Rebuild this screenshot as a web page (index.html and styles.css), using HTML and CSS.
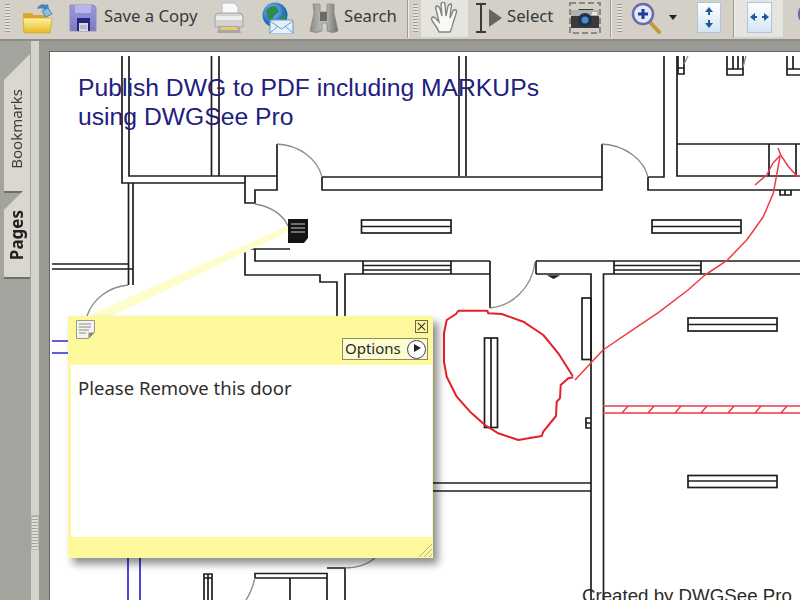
FILE: index.html
```html
<!DOCTYPE html>
<html lang="en">
<head>
<meta charset="utf-8">
<title>DWGSee Pro</title>
<link rel="stylesheet" href="styles.css">
</head>
<body>
<div class="app">
  <header class="toolbar">
    <span class="grip grip-first"></span>
    <svg class="ic ic-open" viewBox="0 0 32 32"><defs><linearGradient id="fy" x1="0" y1="0" x2="0" y2="1"><stop offset="0" stop-color="#fff3a0"/><stop offset="1" stop-color="#e8b820"/></linearGradient><linearGradient id="sb" x1="0" y1="0" x2="0" y2="1"><stop offset="0" stop-color="#9d98d8"/><stop offset="1" stop-color="#7d7ac4"/></linearGradient><radialGradient id="gl" cx=".4" cy=".35" r=".7"><stop offset="0" stop-color="#9fd4f0"/><stop offset=".6" stop-color="#2a78c8"/><stop offset="1" stop-color="#154a9a"/></radialGradient><linearGradient id="bn" x1="0" y1="0" x2="1" y2="0"><stop offset="0" stop-color="#8a8a86"/><stop offset=".5" stop-color="#c4c4c0"/><stop offset="1" stop-color="#6e6e6a"/></linearGradient></defs><path d="M1 11h9l2 2h12v4H1z" fill="#d8a828"/><path d="M1 16h29l-2 15H2z" fill="url(#fy)" stroke="#d0a830" stroke-width=".8"/><path d="M15 7c1-4 6-6 9-4l2-1 1 6-6 1 1-2c-2-1-5-1-7 0z" fill="#4a82b8"/><path d="M20 9l6-3 4 6-6 3z" fill="#8cc0e0" stroke="#4a82b8"/></svg>
    <svg class="ic ic-save" viewBox="0 0 28 28"><path d="M1 1h24l2 2v24H1z" fill="url(#sb)" stroke="#8f8fc4"/><rect x="6" y="1" width="16" height="11" fill="#b8b6e6"/><rect x="6" y="9" width="16" height="3" fill="#8f8dcf"/><rect x="8" y="14" width="13" height="13" fill="#23267c"/><rect x="10" y="19" width="9" height="8" fill="#d8d8e2"/><path d="M11 22h7M11 24h7" stroke="#9a9aa8"/></svg>
    <span class="label label-save">Save a Copy</span>
    <svg class="ic ic-print" viewBox="0 0 32 32"><path d="M9 1h12l4 4v8H9z" fill="#f6f8fc" stroke="#b8bcc6"/><path d="M2 15q0-4 4-4h20q4 0 4 4v10H2z" fill="#d2d2d2" stroke="#a4a4a4"/><rect x="3" y="14" width="26" height="4" fill="#eeeeee"/><path d="M6 24h20l2 7H4z" fill="#a8a8a2"/><path d="M8 25h16l1 3H7z" fill="#e8cc66"/></svg>
    <svg class="ic ic-web" viewBox="0 0 32 32"><circle cx="13" cy="13" r="12.500" fill="url(#gl)"/><path d="M4 8q6-6 11-3l2 5-5 4-3 6-4-5z" fill="#2e8a50"/><path d="M18 16l5-4 2 3-4 5z" fill="#2e8a50"/><rect x="8" y="18" width="23" height="14" rx="1" fill="#e4f0fa" stroke="#6a9ad0"/><path d="M8 19l11.500 8 11.500-8M8 31l8-7M31 31l-8-7" fill="none" stroke="#6a9ad0"/></svg>
    <svg class="ic ic-bino" viewBox="0 0 30 30"><path d="M4 1h7v8h7V1h7v9l4 18q-5 3-11 0v-8h-5v8q-6 3-12 0l4-18z" fill="url(#bn)" stroke="#8a8a82" stroke-width=".8"/><path d="M11 9h7v9h-7z" fill="#6a6a64"/></svg>
    <span class="label label-search">Search</span>
    <span class="sep sep-a"></span>
    <span class="grip grip-a"></span>
    <span class="press press-hand"><svg class="ic-in" viewBox="0 0 30 32"><path d="M9 30q-2-5-6-10-3-4 0-5 2 0 5 4l1 1-3-13q-1-3 1-3 2 0 3 3l2 7-1-11q0-3 2-3t2 3l1 11 2-10q1-2 3-2 1 1 0 4l-1 10 3-7q1-2 3-1 1 1 0 4l-3 9q-1 6-3 9z" fill="#f8f8f4" stroke="#85857f" stroke-width="1.400"/></svg></span>
    <svg class="ic ic-beam" viewBox="0 0 28 30"><path d="M1 1h10M6 1v28M1 29h10" fill="none" stroke="#3a3a38" stroke-width="2"/><path d="M14 6l13 9-13 9z" fill="#66665f"/></svg>
    <span class="label label-select">Select</span>
    <svg class="ic ic-cam" viewBox="0 0 32 32"><rect x="1" y="1" width="30" height="30" fill="none" stroke="#8a8a84" stroke-width="2" stroke-dasharray="6 3"/><path d="M2 9h6l2-2h14l1 2h5v17H2z" fill="#3a3a3a"/><rect x="2" y="8" width="28" height="6" fill="#b0b0ae"/><circle cx="16" cy="18" r="7" fill="#20304a"/><circle cx="16" cy="18" r="3.500" fill="#4a88c8"/><rect x="23" y="10" width="5" height="3" fill="#e8e8e8"/></svg>
    <span class="sep sep-b"></span>
    <span class="grip grip-b"></span>
    <svg class="ic ic-zoom" viewBox="0 0 30 32"><path d="M18 19l10 11" stroke="#c49a3a" stroke-width="4" stroke-linecap="round"/><circle cx="12" cy="12" r="10" fill="#e4e8fa" stroke="#6a6ab0" stroke-width="2.500"/><path d="M7 12h10M12 7v10" stroke="#1e3a9a" stroke-width="3"/></svg>
    <span class="caret"></span>
    <svg class="ic ic-fitp" viewBox="0 0 24 31"><defs><linearGradient id="pg" x1="0" y1="0" x2="0" y2="1"><stop offset="0" stop-color="#fff"/><stop offset="1" stop-color="#d4e4f4"/></linearGradient></defs><rect x=".5" y=".5" width="23" height="30" fill="url(#pg)" stroke="#b0c4dc"/><path d="M12 5l-4 5h3v3h2v-3h3zM12 26l-4-5h3v-3h2v3h3z" fill="#1e5a9a"/></svg>
    <span class="sep sep-c"></span>
    <span class="press press-fit"><svg class="ic-in" viewBox="0 0 25 31"><rect x=".5" y=".5" width="24" height="30" fill="url(#pg)" stroke="#b0c4dc"/><path d="M3 15l5-4v3h2v2H8v3zM22 15l-5-4v3h-2v2h2v3z" fill="#1e5a9a"/></svg></span>
    <svg class="ic ic-next" viewBox="0 0 30 32"><circle cx="12" cy="12" r="10" fill="#e4e8fa" stroke="#6a6ab0" stroke-width="2.500"/></svg>
  </header>
  <div class="main">
    <aside class="sidebar">
      <div class="tab tab-book"><span class="tab-text">Bookmarks</span></div>
      <div class="tab tab-pages"><span class="tab-text tab-strong">Pages</span></div>
    </aside>
    <div class="splitter"><span class="split-grip"></span></div>
    <section class="viewer">
      <div class="page">
        <svg class="drawing" viewBox="50 52 750 548" width="750" height="548">
          <g class="wall">
            <path d="M122 56V183H245M129 56V176H277M211.500 56V176M219 56V176"/>
            <path d="M245 176V203H255V190H277V144M322 177V190H602V144M322 177H602M459 56V176M466 56V176"/>
            <path d="M648 177V190H800M648 177H664V56M677 56V176H800M677 144H800M769 144V176M796 144V176"/>
            <path d="M780 190V195H791V190M785 190V195"/>
            <path d="M128.500 183V285M133 183V285M52 264H128.500M52 269H133"/>
            <rect x="361.500" y="220" width="89.500" height="13"/><path d="M361.500 226.500H451"/>
            <rect x="652" y="220" width="89" height="13"/><path d="M652 226.500H741"/>
            <path d="M290 249H245V275H320V282H337V320M255 249V261H490M345 320V274H490M490 261V308"/>
            <path d="M363 261V274M451 261V274M363 265.500H451M363 270H451"/>
            <path d="M536 261V274M536 261H800M536 274H591V600M603.500 600V274H800M614 261V274M701 261V274M614 265.500H701M614 270H701"/>
            <path d="M550 276H557L553.500 278Z"/>
            <rect x="582" y="298" width="9" height="61.500"/>
            <rect x="484.500" y="338" width="13" height="89.500"/><path d="M491 338V427.500"/>
            <path d="M591 418H586V428H591M586 423H591"/>
            <rect x="688" y="318" width="89" height="13"/><path d="M688 324.500H777"/>
            <rect x="688" y="475.500" width="89" height="12"/><path d="M688 481H777"/>
            <path d="M433 483H591M433 491H591"/>
            <path d="M204 600V574H212V600M208 574V600M204 578H212"/>
            <path d="M255 578V573.500H327V600M255 578H327M290 578V600M327 568H345V600"/>
            <path d="M678 56V74H684V56M678 68H684M727 56V75H743V56M727 69H743M733 56V69M738 56V69M787 56V75H800M787 69H800M793 56V69"/>
          </g>
          <g class="swing">
            <path d="M277 144C300 145 318 160 322 177M602 144C625 145 644 160 648 177M490 308C512 306 532 288 535 262M255 204C272 207 283 215 288 226M128 285C108 287 92 300 87 316M255 578C253 586 250 594 246 600M345 568C358 568 368 564 375 558M684 64L688 56M743 67L746 56"/>
          </g>
          <polygon class="leader" points="287,226 290,231 112,316 88,316"/>
          <g class="blue"><path d="M52 341H70M52 353H70M128 556V600M140 556V600"/></g>
          <g class="red">
            <path d="M572.700 376L558.300 353.300L543.300 335L523.300 321.700L501.700 314L488.300 313.300L487.300 310.700L458.300 310.700L456 314L446.700 320L444 333.300L444 361.700L446.700 376.700L456.700 396.700L470 411.700L485 425L498.300 433.300L518.300 440L541.700 436L543.300 431.700L556 416L556.700 401.700L560 398.300L560.700 385L568.300 378.300L573.300 377.300"/>
          </g>
          <g class="red-thin">
            <path d="M575 380L603 350L630 331.700L658.300 312.700L688 290L705 275L726.700 260.700L746.700 240L763.300 216.700L773.300 193.300L780 156.700"/>
            <path d="M755 185L766.700 175L773 163L780.700 155L778 148M780.700 155L788 166L796.700 176L800 176"/>
            <path d="M603 406H800M603 413H800M622 413L628 406M648 413L654 406M675 413L681 406M701 413L707 406M728 413L734 406M755 413L761 406M781 413L787 406"/>
          </g>
          <text class="title" x="78" y="96">Publish DWG to PDF including MARKUPs</text>
          <text class="title" x="78" y="125">using DWGSee Pro</text>
          <text class="credit" x="582" y="602">Created by DWGSee Pro.</text>
          <g class="marker">
            <path d="M288 219H308V238L304 243H288Z"/>
            <path d="M291 224H305M291 228H305M291 232H305" class="marker-lines"/>
          </g>
        </svg>
        <div class="note">
          <div class="note-head">
            <div class="note-top">
              <svg class="note-icon" viewBox="0 0 19 19"><path d="M.5.500h18v12l-6 6h-12z" fill="#f4f4ee" stroke="#9a9a90"/><path d="M3 4h12M3 7h12M3 10h10M3 13h7" stroke="#8a8a84"/><path d="M12.500 18.500v-6h6z" fill="#8a8a80"/></svg>
              <span class="note-close"><svg viewBox="0 0 12 12" class="note-x"><path d="M2 2l8 8M10 2l-8 8"/></svg></span>
            </div>
            <div class="note-bar">
              <span class="options"><span class="options-text">Options</span><span class="options-play"></span></span>
            </div>
          </div>
          <div class="note-body">Please Remove this door</div>
          <div class="note-foot"><svg class="note-resize" viewBox="0 0 16 16"><path d="M2 15L15 2M7 15L15 7M12 15L15 12"/></svg></div>
        </div>
      </div>
    </section>
  </div>
</div>
</body>
</html>
```
FILE: styles.css
```css
* { box-sizing: border-box; }
html, body { margin: 0; padding: 0; }
body { width: 800px; height: 600px; overflow: hidden; background: #a4a49e; font-family: "Noto Sans", "Liberation Sans", sans-serif; }
.app { width: 800px; height: 600px; display: flex; flex-direction: column; filter: blur(.45px); }

.toolbar { height: 41px; flex: none; display: flex; align-items: center; background: #d4d0c8; border-bottom: 2px solid #8d8d86; overflow: hidden; padding-bottom: 4px; color: #3a3a38; }
.ic { display: block; flex: none; }
.ic-in { display: block; }
.grip { flex: none; width: 5px; height: 28px; background: repeating-linear-gradient(#9c9a92 0 1px, #e4e2dc 1px 3px); }
.grip-first { margin-left: 5px; }
.ic-open { width: 32px; height: 32px; margin-left: 12px; }
.ic-save { width: 28px; height: 28px; margin-left: 15px; }
.label { flex: none; font-size: 16.700px; line-height: 20px; white-space: nowrap; padding-bottom: 3px; }
.label-save { margin-left: 7px; width: 94px; }
.ic-print { width: 32px; height: 32px; margin-left: 15px; }
.ic-web { width: 32px; height: 32px; margin-left: 17px; }
.ic-bino { width: 30px; height: 30px; margin-left: 15px; }
.label-search { margin-left: 5px; width: 54px; }
.sep { flex: none; width: 2px; height: 41px; background: #9c9a92; border-right: 1px solid #efece6; }
.sep-a { margin-left: 9px; }
.grip-a { margin-left: 4px; }
.press { flex: none; display: flex; align-items: center; justify-content: center; background: #e6e4de; height: 38px; }
.press-hand { width: 47px; margin-left: 3px; }
.press-hand .ic-in { width: 30px; height: 32px; }
.ic-beam { width: 28px; height: 30px; margin-left: 7px; }
.label-select { margin-left: 4px; width: 47px; }
.ic-cam { width: 32px; height: 32px; margin-left: 15px; }
.sep-b { margin-left: 9px; }
.grip-b { margin-left: 5px; }
.ic-zoom { width: 30px; height: 32px; margin-left: 9px; }
.caret { flex: none; margin-left: 8px; width: 0; height: 0; border: 4px solid transparent; border-top: 5px solid #222; border-bottom: 0; }
.ic-fitp { width: 24px; height: 31px; margin-left: 20px; }
.sep-c { margin-left: 12px; }
.press-fit { width: 48px; }
.press-fit .ic-in { width: 25px; height: 31px; }
.ic-next { width: 30px; height: 32px; margin-left: 14px; }

.main { flex: 1; display: flex; min-height: 0; }
.sidebar { width: 30px; flex: none; background: #a4a49e; padding-top: 13px; display: flex; flex-direction: column; align-items: flex-end; }
.tab { width: 26px; background: #dad7cf; border-bottom: 2px solid #6f6f69; display: flex; align-items: center; justify-content: center; clip-path: polygon(100% 0, 100% 100%, 0 100%, 0 26px); }
.tab-book { height: 139px; padding: 12px 2px 0 0; }
.tab-pages { height: 95px; margin-top: -9px; padding: 10px 2px 0 0; }
.tab-text { writing-mode: vertical-rl; transform: rotate(180deg); font-size: 15px; color: #3c3c3a; white-space: nowrap; }
.tab-strong { font-weight: 700; font-size: 17px; color: #222; }
.splitter { width: 8px; flex: none; margin-left: 1px; background: #d6d3cc; position: relative; }
.split-grip { position: absolute; left: 0; top: 474px; width: 8px; height: 35px; background: repeating-linear-gradient(#a8a69e 0 1px, #dedcd6 1px 3px); border: 1px solid #bcbab2; }

.viewer { flex: 1; min-width: 0; background: #9a9a94; padding: 11px 0 0 11px; }
.page { position: relative; width: 750px; height: 548px; background: #fff; outline: 1px solid #66665f; overflow: hidden; }
.drawing { display: block; }
.wall path, .wall rect { fill: none; stroke: #1e1e1e; stroke-width: 1.700; }
.swing path { fill: none; stroke: #8a8a8a; stroke-width: 1.300; }
.leader { fill: #fefdcb; }
.blue path { fill: none; stroke: #2a2ad8; stroke-width: 1.700; }
.red path { fill: none; stroke: #e4202c; stroke-width: 2; stroke-linejoin: round; }
.red-thin path { fill: none; stroke: #ee3a46; stroke-width: 1.500; stroke-linejoin: round; }
.title { font-family: "Liberation Sans", sans-serif; font-size: 24.700px; fill: #20207e; }
.credit { font-family: "Liberation Sans", sans-serif; font-size: 18.700px; fill: #2a2a2a; }
.marker path { fill: #141414; }
.marker .marker-lines { fill: none; stroke: #c8c8c8; stroke-width: 1.200; }

.note { position: absolute; left: 18px; top: 264px; width: 365px; height: 242px; display: flex; flex-direction: column; background: #fdf89c; box-shadow: 5px 6px 8px rgba(0,0,0,.45); }
.note-head { height: 49px; flex: none; padding: 4px 5px 0 8px; display: flex; flex-direction: column; }
.note-top { display: flex; justify-content: space-between; align-items: flex-start; height: 18px; }
.note-icon { width: 19px; height: 19px; display: block; }
.note-close { width: 13px; height: 13px; border: 1px solid #6a6a50; display: block; }
.note-x { display: block; width: 11px; height: 11px; }
.note-x path { fill: none; stroke: #333; stroke-width: 1.200; }
.note-bar { display: flex; justify-content: flex-end; }
.options { display: flex; align-items: center; justify-content: space-between; width: 86px; height: 22px; padding: 0 1px 2px 2px; background: #fdfccf; border: 1px solid #8a8a70; font-size: 15px; color: #2a2a2a; }
.options-text { line-height: 18px; }
.options-play { width: 19px; height: 19px; border-radius: 50%; border: 1.500px solid #444; background: #fff; position: relative; flex: none; margin-bottom: -2px; }
.options-play::after { content: ""; position: absolute; left: 6px; top: 3.500px; border-left: 7px solid #222; border-top: 4.500px solid transparent; border-bottom: 4.500px solid transparent; }
.note-body { flex: 1; margin: 0 1px 0 3px; padding: 11px 7px; background: #fff; font-size: 18.500px; line-height: 24px; color: #2e2e2e; }
.note-foot { height: 21px; flex: none; display: flex; justify-content: flex-end; align-items: flex-end; }
.note-resize { width: 16px; height: 16px; display: block; }
.note-resize path { fill: none; stroke: #b4b48a; stroke-width: 1; }
```
